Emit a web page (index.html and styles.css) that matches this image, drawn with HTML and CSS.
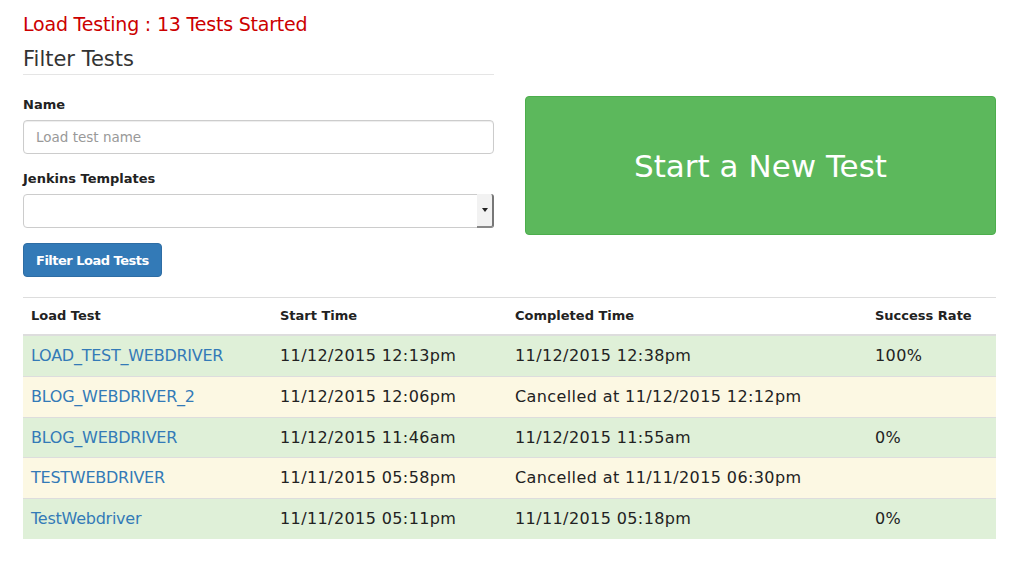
FILE: index.html
```html
<!DOCTYPE html>
<html>
<head>
<meta charset="utf-8">
<title>Load Testing</title>
<link rel="stylesheet" href="styles.css">
</head>
<body>
<div class="container">
  <h3 class="status">Load Testing : 13 Tests Started</h3>
  <div class="row">
    <div class="col">
      <div class="legend">Filter Tests</div>
      <div class="form-group">
        <label class="label">Name</label>
        <input class="input" type="text" placeholder="Load test name">
      </div>
      <div class="form-group">
        <label class="label">Jenkins Templates</label>
        <div class="select">
          <span class="select-arrow"><span class="tri"></span></span>
        </div>
      </div>
      <button class="btn-primary">Filter Load Tests</button>
    </div>
    <div class="col col-right">
      <button class="btn-success">Start a New Test</button>
    </div>
  </div>
  <table class="table">
    <thead>
      <tr>
        <th class="c1">Load Test</th>
        <th class="c2">Start Time</th>
        <th class="c3">Completed Time</th>
        <th class="c4">Success Rate</th>
      </tr>
    </thead>
    <tbody>
      <tr class="success">
        <td class="name"><a href="#">LOAD_TEST_WEBDRIVER</a></td>
        <td>11/12/2015 12:13pm</td>
        <td>11/12/2015 12:38pm</td>
        <td>100%</td>
      </tr>
      <tr class="warning">
        <td class="name"><a href="#">BLOG_WEBDRIVER_2</a></td>
        <td>11/12/2015 12:06pm</td>
        <td>Cancelled at 11/12/2015 12:12pm</td>
        <td></td>
      </tr>
      <tr class="success">
        <td class="name"><a href="#">BLOG_WEBDRIVER</a></td>
        <td>11/12/2015 11:46am</td>
        <td>11/12/2015 11:55am</td>
        <td>0%</td>
      </tr>
      <tr class="warning">
        <td class="name"><a href="#">TESTWEBDRIVER</a></td>
        <td>11/11/2015 05:58pm</td>
        <td>Cancelled at 11/11/2015 06:30pm</td>
        <td></td>
      </tr>
      <tr class="success">
        <td class="name"><a href="#">TestWebdriver</a></td>
        <td>11/11/2015 05:11pm</td>
        <td>11/11/2015 05:18pm</td>
        <td>0%</td>
      </tr>
    </tbody>
  </table>
</div>
</body>
</html>
```
FILE: styles.css
```css
* { box-sizing: border-box; }
html, body { margin: 0; padding: 0; background: #fff; }
body {
  font-family: "DejaVu Sans", Verdana, sans-serif;
  font-size: 14px;
  line-height: 1.42857;
  color: #333;
}
.container { padding: 0 20px 0 23px; }
.status {
  margin: 13px 0 0;
  font-size: 19px;
  letter-spacing: -0.2px;
  font-weight: normal;
  line-height: 22px;
  color: #c00;
}
.row { display: flex; gap: 31px; }
.col { flex: 1 1 0; min-width: 0; }
.col-right { padding-top: 61px; }
.legend {
  margin-top: 10px;
  font-size: 21px;
  line-height: 29px;
  border-bottom: 1px solid #e5e5e5;
  margin-bottom: 20px;
  color: #333;
}
.form-group { margin-bottom: 15px; }
.label {
  display: block;
  font-size: 13px;
  line-height: 20px;
  font-weight: bold;
  margin-bottom: 5px;
  color: #222;
}
.input {
  display: block;
  width: 100%;
  height: 34px;
  padding: 6px 12px;
  font-family: inherit;
  font-size: 13.5px;
  color: #555;
  border: 1px solid #ccc;
  border-radius: 4px;
  box-shadow: inset 0 1px 1px rgba(0,0,0,.075);
  background: #fff;
}
.input::placeholder { color: #999; }
.select {
  position: relative;
  height: 34px;
  border: 1px solid #ccc;
  border-radius: 4px;
  background: #fff;
}
.select-arrow {
  position: absolute;
  top: -1px;
  right: -1px;
  bottom: -1px;
  width: 17px;
  background: #f2f2f2;
  border-right: 2px solid #777;
  border-bottom: 2px solid #888;
  border-radius: 0 3px 3px 0;
  display: flex;
  align-items: center;
  justify-content: center;
}
.tri {
  width: 0; height: 0;
  border-left: 3px solid transparent;
  border-right: 3px solid transparent;
  border-top: 4px solid #222;
}
.btn-primary {
  display: inline-block;
  height: 34px;
  padding: 6px 12px;
  font-family: inherit;
  font-size: 13px;
  letter-spacing: -0.5px;
  font-weight: bold;
  color: #fff;
  background: #337ab7;
  border: 1px solid #2e6da4;
  border-radius: 4px;
  margin-bottom: 20px;
}
.btn-success {
  display: block;
  width: 100%;
  height: 139px;
  font-family: inherit;
  font-size: 31px;
  color: #fff;
  background: #5cb85c;
  border: 1px solid #4cae4c;
  border-radius: 4px;
}
.table {
  width: 100%;
  border-collapse: collapse;
  border-spacing: 0;
}
.table th, .table td {
  padding: 8px;
  text-align: left;
  vertical-align: top;
  border-top: 1px solid #ddd;
}
.table th {
  font-size: 13px;
  line-height: 20px;
  font-weight: bold;
  border-bottom: 2px solid #ddd;
  color: #222;
}
.table td {
  font-size: 16px;
  line-height: 23.8px;
  letter-spacing: 0.4px;
  color: #222;
}
.table td.name { letter-spacing: -0.25px; }
.c1 { width: 249px; }
.c2 { width: 235px; }
.c3 { width: 360px; }
.table tr.success td { background: #dff0d8; }
.table tr.warning td { background: #fcf8e3; }
.table a { color: #337ab7; text-decoration: none; }
```
